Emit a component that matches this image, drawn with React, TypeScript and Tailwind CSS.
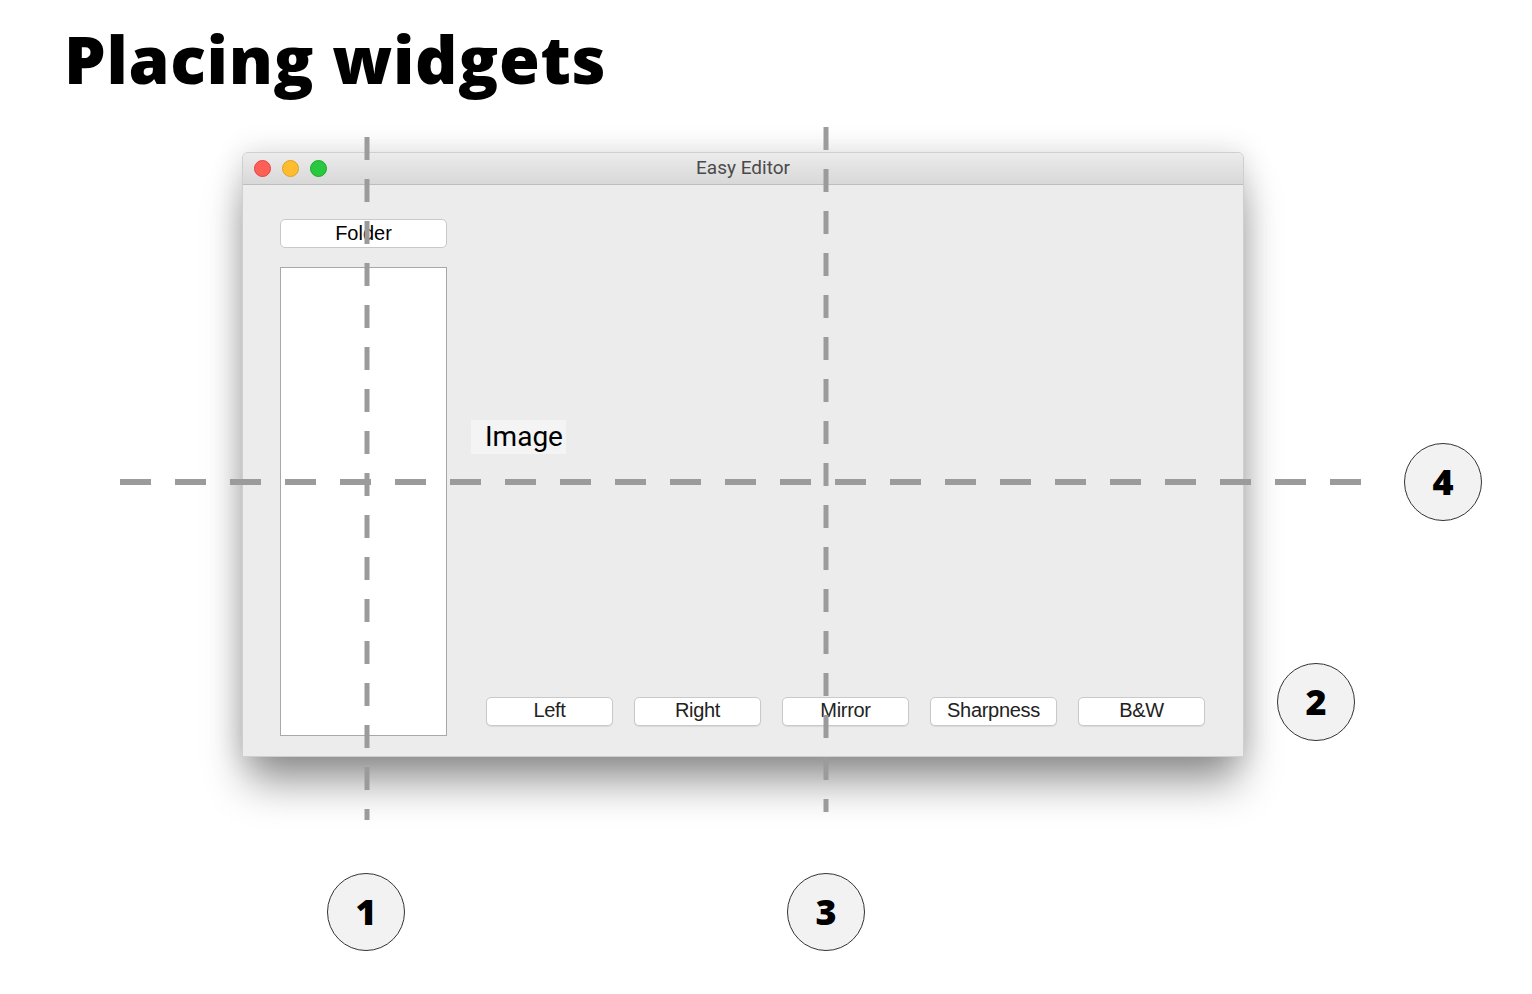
import React from "react";

const buttons = ["Left", "Right", "Mirror", "Sharpness", "B&W"];

function Marker({ n, x, y }: { n: string; x: number; y: number }) {
  return (
    <div
      className="absolute flex h-[78px] w-[78px] items-center justify-center rounded-full border-[1.5px] border-[#333] bg-[#f2f2f2] text-[36px] font-extrabold text-black"
      style={{ left: x - 39, top: y - 39, fontFamily: '"Open Sans", sans-serif' }}
    >
      {n}
    </div>
  );
}

function MacButton({ children }: { children: React.ReactNode }) {
  return (
    <div className="flex h-[29px] w-[127px] items-center justify-center rounded-[5px] border border-[#c9c9c9] bg-white pb-[3px] text-[20px] leading-none tracking-[-0.3px] text-[#222] shadow-[0_1px_1px_rgba(0,0,0,0.08)]">
      {children}
    </div>
  );
}

export default function App() {
  return (
    <div className="relative h-[994px] w-[1532px] overflow-hidden bg-white" style={{ fontFamily: '"Liberation Sans", Arial, sans-serif' }}>
      <h1
        className="pl-[64px] pt-[18px] text-[66px] font-extrabold leading-[80px] tracking-[0.7px] text-black"
        style={{ fontFamily: '"Open Sans", sans-serif' }}
      >
        Placing widgets
      </h1>

      {/* Window */}
      <div className="ml-[242px] mt-[54px] w-[1002px] overflow-hidden rounded-t-[6px] border border-[#cfcfcf] bg-[#ececec] shadow-[0_30px_40px_-6px_rgba(0,0,0,0.42),0_0_30px_rgba(0,0,0,0.14)]">
        {/* Title bar */}
        <div className="relative flex h-[32px] items-center border-b border-[#bdbdbd] bg-gradient-to-b from-[#ececec] to-[#d8d8d8] px-[11px]">
          <div className="flex gap-[11px]">
            <span className="h-[17px] w-[17px] rounded-full border border-[#e0443e] bg-[#fe5f57]" />
            <span className="h-[17px] w-[17px] rounded-full border border-[#dea123] bg-[#febc2e]" />
            <span className="h-[17px] w-[17px] rounded-full border border-[#1aab29] bg-[#28c840]" />
          </div>
          <div className="absolute inset-0 flex items-center justify-center text-[19px] text-[#4a4a4a]" style={{ fontFamily: "Roboto, sans-serif" }}>
            Easy Editor
          </div>
        </div>

        {/* Body */}
        <div className="flex h-[571px] pl-[37px] pt-[34px]">
          <div className="flex w-[167px] flex-col">
            <div className="flex h-[29px] items-center justify-center rounded-[5px] border border-[#c9c9c9] bg-white pb-[2px] text-[20px] leading-none text-black">
              Folder
            </div>
            <div className="mt-[19px] h-[469px] border border-[#a8a8a8] bg-white" />
          </div>
          <div className="flex flex-1 flex-col pl-[24px]">
            <div
              className="mt-[201px] flex h-[34px] w-[95px] items-center bg-[#f4f4f4] pl-[14px] text-[28px] text-black"
              style={{ fontFamily: "Roboto, sans-serif" }}
            >
              Image
            </div>
            <div className="mt-[243px] flex gap-[21px] pl-[15px]">
              {buttons.map((b) => (
                <MacButton key={b}>{b}</MacButton>
              ))}
            </div>
          </div>
        </div>
      </div>

      {/* Guide lines */}
      <svg className="pointer-events-none absolute left-0 top-0" width="1532" height="994">
        <line x1="367" y1="137" x2="367" y2="820" stroke="#9b9b9b" strokeWidth="5" strokeDasharray="23 19" />
        <line x1="826" y1="127" x2="826" y2="812" stroke="#9b9b9b" strokeWidth="5" strokeDasharray="23 19" />
        <line x1="120" y1="482" x2="1366" y2="482" stroke="#9b9b9b" strokeWidth="6" strokeDasharray="31 24" />
      </svg>

      <Marker n="4" x={1443} y={482} />
      <Marker n="2" x={1316} y={702} />
      <Marker n="1" x={366} y={912} />
      <Marker n="3" x={826} y={912} />
    </div>
  );
}
